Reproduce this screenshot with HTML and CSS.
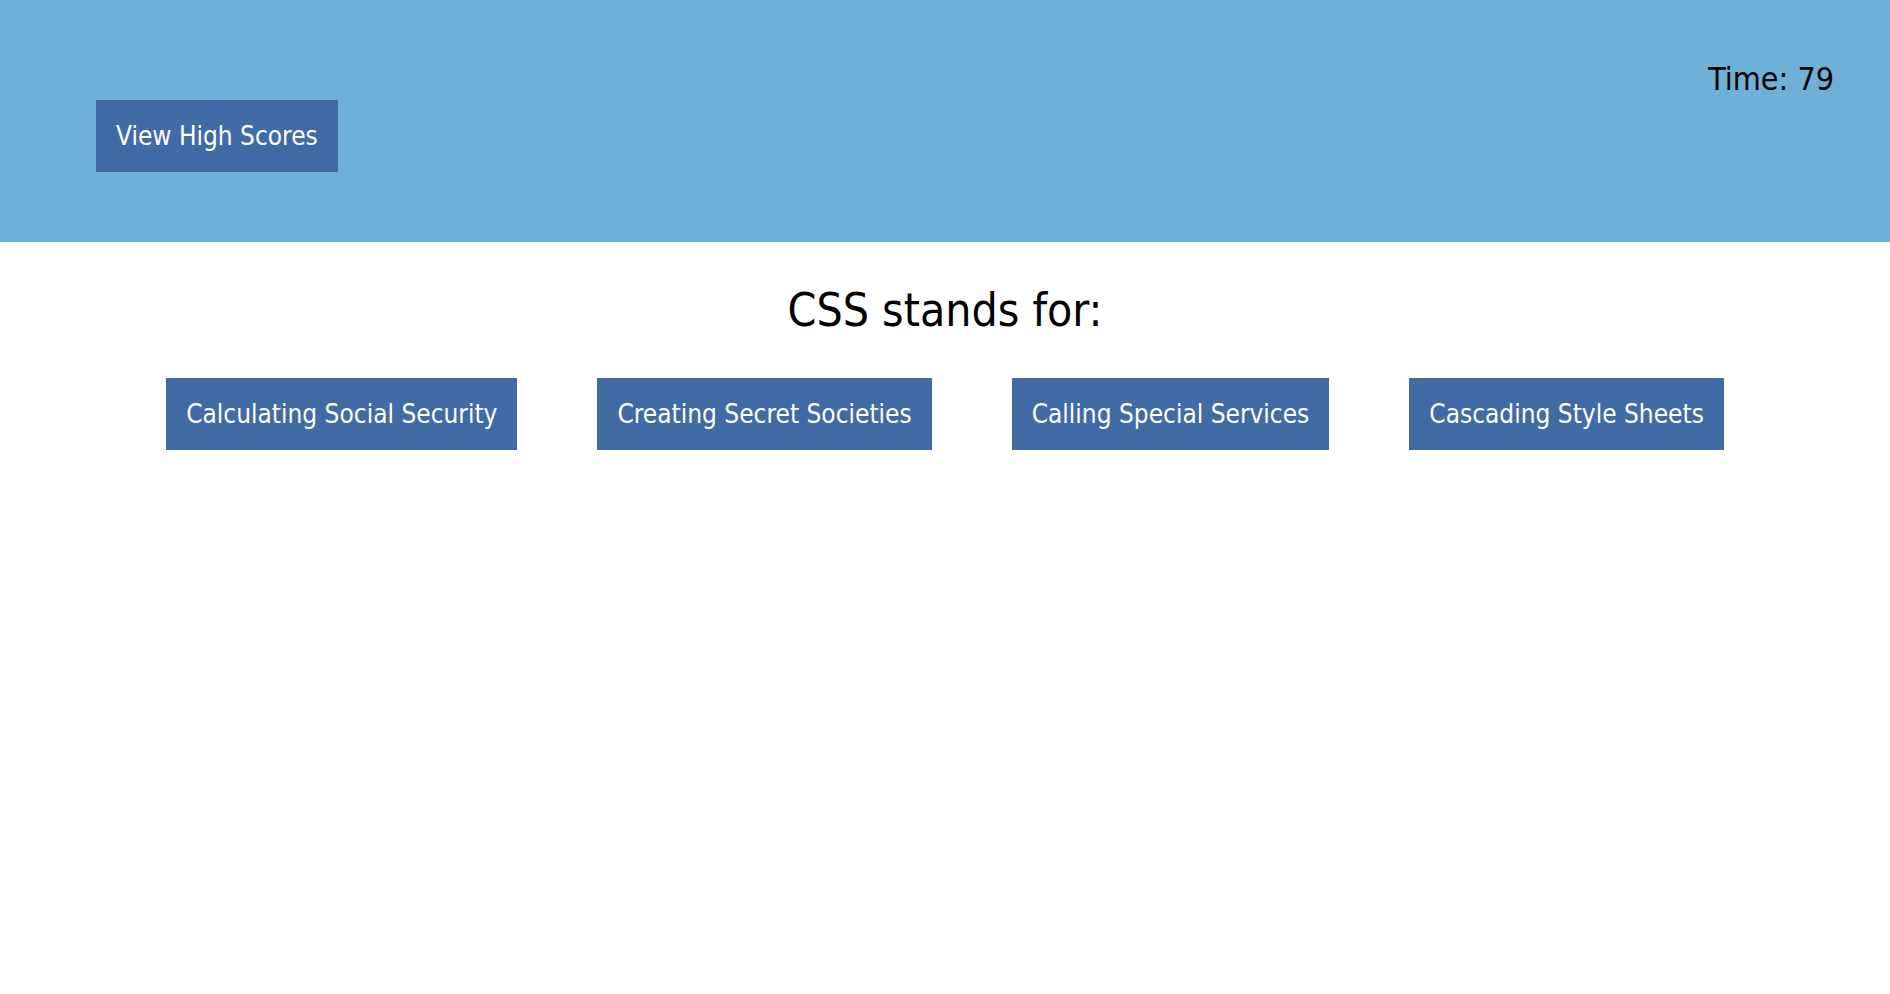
FILE: index.html
```html
<!DOCTYPE html>
<html>
<head>
<meta charset="utf-8">
<title>Code Quiz</title>
<link rel="stylesheet" href="styles.css">
</head>
<body>
<header class="top">
  <button class="btn btn-scores">View High Scores</button>
  <div class="timer">Time: 79</div>
</header>
<main class="quiz">
  <h1 class="question">CSS stands for:</h1>
  <div class="answers">
    <button class="btn">Calculating Social Security</button>
    <button class="btn">Creating Secret Societies</button>
    <button class="btn">Calling Special Services</button>
    <button class="btn">Cascading Style Sheets</button>
  </div>
</main>
</body>
</html>
```
FILE: styles.css
```css
* { box-sizing: border-box; }
html, body { margin: 0; padding: 0; background: #ffffff; }
body { font-family: "DejaVu Sans Condensed", "DejaVu Sans", sans-serif; color: #000; }
.top {
  height: 242px;
  background: #6fb0d7;
  display: flex;
  justify-content: space-between;
  align-items: flex-start;
  padding: 0 56px 0 96px;
}
.btn {
  font-family: inherit;
  font-size: 26px;
  line-height: 32px;
  color: #ffffff;
  background: #416ba5;
  border: none;
  border-radius: 0;
  padding: 20px 20px;
  height: 72px;
  cursor: pointer;
}
.btn-scores { margin-top: 100px; }
.timer { font-size: 32px; line-height: 38px; margin-top: 60px; }
.quiz { display: flex; flex-direction: column; align-items: center; }
.question { font-size: 46px; font-weight: normal; line-height: 52px; margin: 0; padding-top: 42px; }
.answers { display: flex; justify-content: center; gap: 80px; margin-top: 42px; }
```
